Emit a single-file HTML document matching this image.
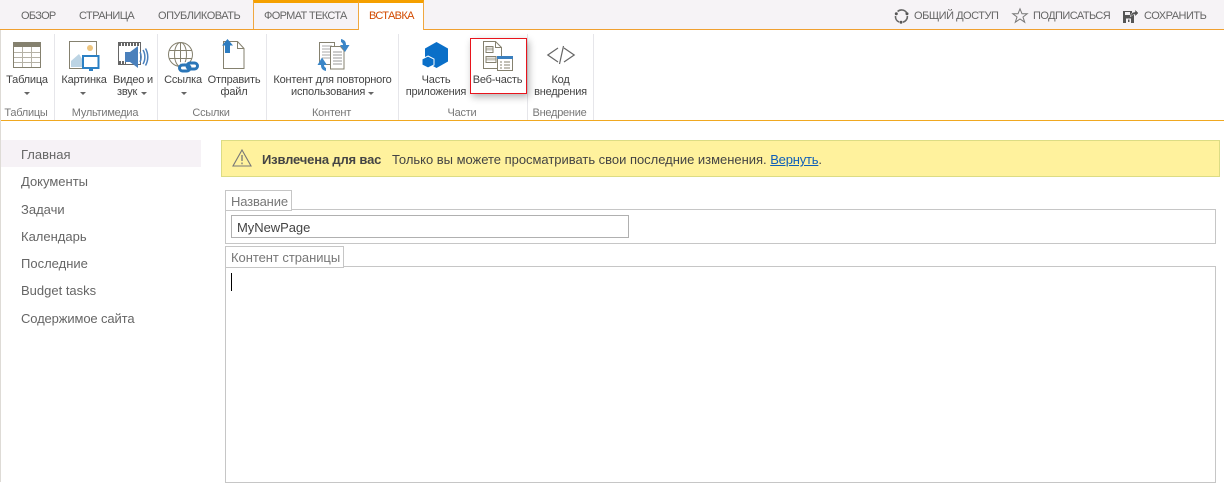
<!DOCTYPE html>
<html><head><meta charset="utf-8"><style>
html,body{margin:0;padding:0;background:#fff}
body{width:1224px;height:482px;position:relative;overflow:hidden;font-family:"Liberation Sans",sans-serif;color:#444}
.a{position:absolute}
.t{position:absolute;white-space:nowrap;font-size:11px;line-height:13px;color:#444;text-align:center;letter-spacing:-.2px}
.tab{color:#666;font-size:11px;top:10px}
.lb{color:#777;font-size:11px;top:107px;letter-spacing:-.25px}
.sep{position:absolute;top:34px;height:86px;width:1px;background:#e6e6ea}
.nav{position:absolute;left:21px;font-size:13px;line-height:16px;color:#666;white-space:nowrap}
.arr{position:absolute;width:0;height:0;border:3px solid transparent;border-top:3px solid #666;border-bottom:0}
svg{position:absolute;overflow:visible}
</style></head><body>
<div class="a" style="left:0;top:0;width:1224px;height:29px;background:#f6f3f6"></div>
<div class="a" style="left:0;top:29px;width:1224px;height:1px;background:#f0a030"></div>
<div class="a" style="left:0;top:120px;width:1224px;height:1px;background:#f0a820"></div>
<div class="a" style="left:0;top:30px;width:1px;height:452px;background:#dedbd6"></div>

<div class="t tab" style="left:21px;letter-spacing:-.7px">ОБЗОР</div>
<div class="t tab" style="left:79px;letter-spacing:-.55px">СТРАНИЦА</div>
<div class="t tab" style="left:158px;letter-spacing:-.48px">ОПУБЛИКОВАТЬ</div>
<div class="a" style="left:253px;top:0;width:105px;height:29px;border-left:1px solid #f0a840;box-sizing:border-box;border-top:3px solid #f5a000"></div>
<div class="a" style="left:358px;top:0;width:66px;height:30px;background:#fff;border:1px solid #f0a840;border-bottom:0;box-sizing:border-box;border-top:3px solid #f5a000"></div>
<div class="t tab" style="left:264px;letter-spacing:-.65px">ФОРМАТ ТЕКСТА</div>
<div class="t tab" style="left:369px;color:#d24a00;letter-spacing:-.65px">ВСТАВКА</div>

<!-- right actions -->
<svg style="left:894px;top:9px" width="15" height="15" viewBox="0 0 15 15"><path d="M3.600 2.500A6 6 0 0 1 12.500 3.500M13.400 7A6 6 0 0 1 9 13.200M5 13A6 6 0 0 1 1.500 7" fill="none" stroke="#666" stroke-width="1.600"/><circle cx="13" cy="4.800" r="1.500" fill="#555"/><circle cx="2.300" cy="4.800" r="1.500" fill="#555"/><circle cx="7" cy="13.300" r="1.500" fill="#555"/></svg>
<div class="t tab" style="left:914px;letter-spacing:-.48px">ОБЩИЙ ДОСТУП</div>
<svg style="left:1012px;top:8px" width="16" height="15" viewBox="0 0 16 15"><path d="M8 .8l2 5h5.200l-4.200 3.200 1.700 5.200L8 11l-4.700 3.200L5 9 .8 5.800H6z" fill="none" stroke="#777"/></svg>
<div class="t tab" style="left:1033px;letter-spacing:-.55px">ПОДПИСАТЬСЯ</div>
<svg style="left:1123px;top:9px" width="16" height="15" viewBox="0 0 16 15"><path d="M0 2h9v3h2v9H0z" fill="#555"/><rect x="2" y="3" width="5" height="3" fill="#f6f3f6"/><rect x="3" y="9.500" width="5" height="4.500" fill="#f6f3f6"/><rect x="5" y="10.500" width="1.500" height="2.500" fill="#555"/><path d="M7.500 8c0-4 2.500-5 4.500-5V0.500L15.500 4 12 7.500V5.500c-2 0-3.500 1-4.500 2.500z" fill="#555" stroke="#f6f3f6" stroke-width=".5"/></svg>
<div class="t tab" style="left:1144px;letter-spacing:-.5px">СОХРАНИТЬ</div>

<!-- separators -->
<div class="sep" style="left:54px"></div><div class="sep" style="left:157px"></div><div class="sep" style="left:266px"></div><div class="sep" style="left:398px"></div><div class="sep" style="left:527px"></div><div class="sep" style="left:593px"></div>

<!-- Table icon -->
<svg style="left:13px;top:42px" width="28" height="26" viewBox="0 0 28 26"><rect x=".5" y=".5" width="27" height="25" fill="#fff" stroke="#85816f"/><rect x="0" y="0" width="28" height="5" fill="#85816f"/><path d="M1 10.500h26M1 15.500h26M1 20.500h26M9.500 5v20M18.500 5v20" stroke="#b5b2a6" fill="none"/></svg>
<div class="t" style="left:0;width:54px;top:74px">Таблица</div>
<div class="arr" style="left:24px;top:92px"></div>
<div class="t lb" style="left:-1px;width:54px">Таблицы</div>

<!-- Picture icon -->
<svg style="left:69px;top:41px" width="31" height="31" viewBox="0 0 31 31"><rect x=".5" y=".5" width="27" height="27" fill="#fff" stroke="#85816f"/><circle cx="21" cy="7" r="3" fill="#eec57e"/><path d="M2 26v-6l8-7 8 13z" fill="#bcd4e4"/><rect x="14" y="15" width="15.500" height="12" fill="#fff" stroke="#2b80c4" stroke-width="2"/><rect x="20" y="28" width="4" height="2" fill="#2b80c4"/></svg>
<div class="t" style="left:56px;width:56px;top:74px">Картинка</div>
<div class="arr" style="left:80px;top:92px"></div>
<!-- Video icon -->
<svg style="left:118px;top:42px" width="30" height="28" viewBox="0 0 30 28"><rect x=".5" y=".5" width="22" height="22" fill="#fff" stroke="#666"/><path d="M1 2.500h22M1 20.500h7" stroke="#666" stroke-width="3" stroke-dasharray="2 1"/><path d="M7 10h5l8-6v22l-8-6H7z" fill="#4a80bc"/><path d="M22 10c1.500 3 1.500 7 0 10M25 8c2.500 4 2.500 10 0 14M27.500 6.500c3 5 3 12 0 17" fill="none" stroke="#4a80bc" stroke-width="1.500"/></svg>
<div class="t" style="left:111px;width:44px;top:74px">Видео и</div>
<div class="t" style="left:117px;top:86px">звук</div>
<div class="arr" style="left:141px;top:92px"></div>
<div class="t lb" style="left:54px;width:102px">Мультимедиа</div>

<!-- Link icon -->
<svg style="left:168px;top:42px" width="32" height="31" viewBox="0 0 32 31"><g fill="none" stroke="#85816f"><circle cx="12.500" cy="12.500" r="12"/><ellipse cx="12.500" cy="12.500" rx="6" ry="12"/><path d="M12.500 .5v24M1.500 8.500h22M1.500 16.500h22"/></g><path d="M11 20h20v10H11z" fill="#fff" fill-opacity=".85"/><rect x="11.500" y="23" width="10.500" height="6" rx="3" fill="none" stroke="#2a76b8" stroke-width="3"/><rect x="19" y="21" width="10.500" height="6" rx="3" fill="none" stroke="#2a76b8" stroke-width="3"/></svg>
<div class="t" style="left:158px;width:50px;top:74px">Ссылка</div>
<div class="arr" style="left:181px;top:92px"></div>
<!-- Upload icon -->
<svg style="left:222px;top:39px" width="23" height="30" viewBox="0 0 23 30"><path d="M1.500 29.500V2.500h14l6.500 7v20z" fill="#fff" stroke="#85816f"/><path d="M15.500 2.500v7h6.500" fill="none" stroke="#85816f"/><path d="M5.500 0l5.500 6.500H8V14H3V6.500H0z" fill="#2d7cc0"/></svg>
<div class="t" style="left:205px;width:58px;top:74px">Отправить</div>
<div class="t" style="left:205px;width:58px;top:86px">файл</div>
<div class="t lb" style="left:157px;width:108px">Ссылки</div>

<!-- Reusable content icon -->
<svg style="left:317px;top:39px" width="33" height="32" viewBox="0 0 33 32"><path d="M2.500 3.500h15v22h-15z" fill="#fff" stroke="#85816f"/><path d="M5 7h10M5 10h10M5 13h10M5 16h10M5 19h10" stroke="#aaa"/><path d="M13.500 7.500h10l3.500 4v18.500H13.500z" fill="#fff" stroke="#85816f"/><path d="M16 13h9M16 16h9M16 19h9M16 22h9M16 25h9" stroke="#999"/><path d="M24 0c4 1 5 3 5 6h3.500L28 13l-5-7h3c0-1.500-1-2.500-2-3z" fill="#3a86c8"/><path d="M9 32c-4-1-5-3-5-6H.5L5 18.500 10 26H7c0 1.500 1 2.500 2 3z" fill="#3a86c8"/></svg>
<div class="t" style="left:267px;width:131px;top:74px">Контент для повторного</div>
<div class="t" style="left:291px;top:86px">использования</div>
<div class="arr" style="left:368px;top:92px"></div>
<div class="t lb" style="left:266px;width:131px">Контент</div>

<!-- App part -->
<svg style="left:422px;top:42px" width="27" height="27" viewBox="0 0 27 27"><path d="M14.500 0L26 6.500v13L14.500 26 3 19.500v-13z" fill="#0a6fc8"/><path d="M6 14l6 3v6l-6 3-6-3v-6z" fill="#0a6fc8" stroke="#fff" stroke-width="1"/></svg>
<div class="t" style="left:398px;width:76px;top:74px">Часть</div>
<div class="t" style="left:398px;width:76px;top:86px">приложения</div>

<!-- Web part highlighted -->
<div class="a" style="left:470px;top:38px;width:57px;height:56px;box-sizing:border-box;border:1px solid #e8141c;box-shadow:2px 3px 7px rgba(0,0,0,.3);background:#fff"></div>
<svg style="left:483px;top:41px" width="31" height="30" viewBox="0 0 31 30"><path d="M.5.500h12l6 6v21H.5z" fill="#fff" stroke="#85816f"/><path d="M12.500.500v6h6" fill="none" stroke="#85816f"/><path d="M3 5.500h7v6H3zM3 15.500h10v6H3z" fill="#fff" stroke="#85816f"/><path d="M3.500 8h6M3.500 18h9" stroke="#c8c6bc" stroke-width="3"/><rect x="14.500" y="15.500" width="15" height="14" fill="#fff" stroke="#85816f"/><rect x="14" y="15" width="16" height="3" fill="#3a7fbe"/><path d="M17 21h2M21 21h6M17 24h2M21 24h6M17 27h2M21 27h6" stroke="#85816f"/></svg>
<div class="t" style="left:470px;width:55px;top:74px">Веб-часть</div>
<div class="t lb" style="left:398px;width:128px">Части</div>

<!-- Embed -->
<svg style="left:547px;top:46px" width="29" height="18" viewBox="0 0 29 18"><path d="M11 2L.8 9 11 16M17 2l10.200 7L17 16M16.500 0l-4 18" fill="none" stroke="#666" stroke-width="1.200"/></svg>
<div class="t" style="left:528px;width:65px;top:74px">Код</div>
<div class="t" style="left:528px;width:65px;top:86px">внедрения</div>
<div class="t lb" style="left:527px;width:65px">Внедрение</div>

<!-- Nav -->
<div class="a" style="left:1px;top:140px;width:200px;height:27px;background:#f6f2f6"></div>
<div class="nav" style="top:147px">Главная</div>
<div class="nav" style="top:174px">Документы</div>
<div class="nav" style="top:202px">Задачи</div>
<div class="nav" style="top:229px">Календарь</div>
<div class="nav" style="top:256px">Последние</div>
<div class="nav" style="top:283px">Budget tasks</div>
<div class="nav" style="top:311px;letter-spacing:-.12px">Содержимое сайта</div>

<!-- Message -->
<div class="a" style="left:221px;top:140px;width:999px;height:37px;box-sizing:border-box;background:#fff29d;border:1px solid #dcdc84"></div>
<svg style="left:232px;top:149px" width="20" height="18" viewBox="0 0 20 18"><path d="M10 1L19 17H1z" fill="none" stroke="#777" stroke-width="1.100"/><path d="M10 6v6M10 13.500v1.800" stroke="#777" stroke-width="1.300"/></svg>
<div class="t" style="left:262px;top:153px;font-size:13px;font-weight:bold;color:#444;letter-spacing:-.17px">Извлечена для вас</div>
<div class="t" style="left:392px;top:153px;font-size:13px;color:#444;letter-spacing:-.02px">Только вы можете просматривать свои последние изменения. <span style="color:#0f5fb8;text-decoration:underline;letter-spacing:-.2px">Вернуть</span>.</div>

<!-- Form -->
<div class="a" style="left:225px;top:209px;width:991px;height:35px;box-sizing:border-box;border:1px solid #c6c6c6"></div>
<div class="a" style="left:225px;top:190px;width:67px;height:21px;box-sizing:border-box;border:1px solid #c6c6c6;background:#fff"></div>
<div class="t" style="left:231px;top:195px;font-size:13px;color:#777;letter-spacing:-.15px">Название</div>
<div class="a" style="left:231px;top:215px;width:398px;height:23px;box-sizing:border-box;border:1px solid #b0b0b0;background:#fff"></div>
<div class="t" style="left:237px;top:221px;font-size:13px;color:#444;letter-spacing:-.05px">MyNewPage</div>
<div class="a" style="left:225px;top:266px;width:991px;height:217px;box-sizing:border-box;border:1px solid #c6c6c6"></div>
<div class="a" style="left:225px;top:246px;width:119px;height:22px;box-sizing:border-box;border:1px solid #c6c6c6;background:#fff"></div>
<div class="t" style="left:231px;top:251px;font-size:13px;color:#777;letter-spacing:-.05px">Контент страницы</div>
<div class="a" style="left:231px;top:273px;width:1px;height:18px;background:#000"></div>
</body></html>
